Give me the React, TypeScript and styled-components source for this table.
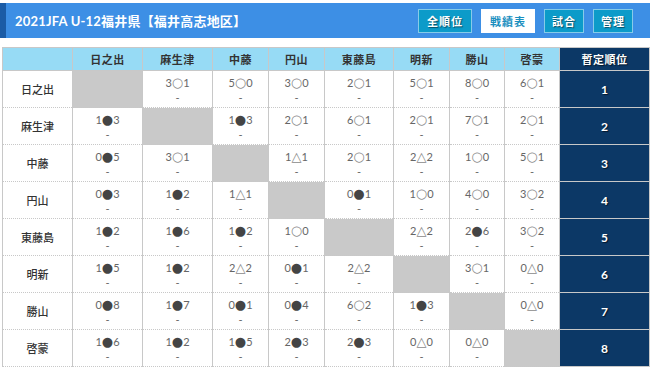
import React from 'react'
import styled, { createGlobalStyle } from 'styled-components'

const GlobalStyle = createGlobalStyle`
  html, body {
    margin: 0;
    padding: 0;
    background: #ffffff;
    font-family: Lato, "Noto Sans CJK JP", sans-serif;
  }
`

const Page = styled.div`
  width: 650px;
  height: 367px;
  overflow: hidden;
  padding-top: 3px;
  box-sizing: border-box;
`

const TitleBar = styled.div`
  display: flex;
  align-items: center;
  justify-content: space-between;
  height: 35px;
  background: #3d8fe5;
  border-left: 6px solid #1b5ca6;
  padding: 0 17px 0 9px;
  box-sizing: border-box;
`

const Title = styled.h1`
  margin: 0;
  color: #ffffff;
  font-family: Lato, "Noto Sans CJK JP", sans-serif;
  font-size: 13px;
  font-weight: bold;
  letter-spacing: 0.2px;
`

const Nav = styled.div`
  display: flex;
  gap: 9px;
`

interface NavButtonProps {
  active?: boolean
  wide?: boolean
}
const NavButton = styled.a<NavButtonProps>`
  display: flex;
  align-items: center;
  justify-content: center;
  height: 24px;
  padding: 0 ${props => props.wide ? '8px' : '7px'};
  box-sizing: border-box;
  border: 1px solid ${props => props.active ? '#ffffff' : '#86cbe8'};
  background: ${props => props.active ? '#ffffff' : '#0c9bc9'};
  color: ${props => props.active ? '#1a8fbf' : '#ffffff'};
  font-family: "Noto Sans CJK JP", sans-serif;
  font-size: 11px;
  font-weight: bold;
  text-shadow: ${props => props.active ? 'none' : '1px 1px 1px rgba(0,0,0,0.5)'};
  letter-spacing: 1px;
`

const Table = styled.table`
  margin: 9px 1px 0 2px;
  width: 647px;
  border-collapse: collapse;
  table-layout: fixed;
`

const HeadCell = styled.th<{ rank?: boolean }>`
  height: 22px;
  padding: 0;
  background: ${props => props.rank ? '#0c3866' : '#97dbf5'};
  color: ${props => props.rank ? '#ffffff' : '#333333'};
  text-shadow: ${props => props.rank ? '1px 1px 1px rgba(0,0,0,0.6)' : 'none'};
  border: 1px solid #c8c8c8;
  font-family: "Noto Sans CJK JP", sans-serif;
  font-size: 11px;
  font-weight: bold;
  text-align: center;
  vertical-align: middle;
  letter-spacing: 0.5px;
`

const Row = styled.tr`
  height: 37px;
`

const NameCell = styled.td`
  padding: 0;
  border-left: 1px solid #c8c8c8;
  border-right: 1px solid #c8c8c8;
  border-bottom: 1px dotted #c8c8c8;
  color: #333333;
  font-family: "Noto Sans CJK JP", sans-serif;
  font-size: 11px;
  font-weight: 500;
  text-align: center;
  vertical-align: middle;
`

const ScoreCell = styled.td<{ blank?: boolean }>`
  padding: 4px 0 0;
  border-left: 1px solid #c8c8c8;
  border-right: 1px solid #c8c8c8;
  border-bottom: 1px dotted #c8c8c8;
  background: ${props => props.blank ? '#c9c9c9' : '#ffffff'};
  color: #666666;
  font-family: Lato, "Noto Sans CJK JP", sans-serif;
  font-size: 11px;
  line-height: 15px;
  text-align: center;
  vertical-align: top;
`

const Mark = styled.span<{ filled?: boolean }>`
  font-family: "DejaVu Sans", sans-serif;
  font-size: 13px;
  color: ${props => props.filled ? '#444444' : '#8a8a8a'};
  line-height: 15px;
`

const RankCell = styled.td`
  padding: 0;
  background: #0c3866;
  border: 1px solid #c8c8c8;
  border-top: 1px solid #9aa8b8;
  color: #ffffff;
  font-family: Lato, sans-serif;
  font-size: 12px;
  font-weight: bold;
  text-shadow: 1px 1px 1px rgba(0,0,0,0.6);
  text-align: center;
  vertical-align: middle;
`

const teams = ['日之出', '麻生津', '中藤', '円山', '東藤島', '明新', '勝山', '啓蒙']
const widths = [70, 70, 70, 56, 56, 69, 56, 55, 55, 90]

const results: string[][] = [
  ['', '3o1', '5o0', '3o0', '2o1', '5o1', '8o0', '6o1'],
  ['1x3', '', '1x3', '2o1', '6o1', '2o1', '7o1', '2o1'],
  ['0x5', '3o1', '', '1t1', '2o1', '2t2', '1o0', '5o1'],
  ['0x3', '1x2', '1t1', '', '0x1', '1o0', '4o0', '3o2'],
  ['1x2', '1x6', '1x2', '1o0', '', '2t2', '2x6', '3o2'],
  ['1x5', '1x2', '2t2', '0x1', '2t2', '', '3o1', '0t0'],
  ['0x8', '1x7', '0x1', '0x4', '6o2', '1x3', '', '0t0'],
  ['1x6', '1x2', '1x5', '2x3', '2x3', '0t0', '0t0', ''],
]

const marks: Record<string, string> = { o: '○', x: '●', t: '△' }

const Score = ({ value }: { value: string }) => (
  <>
    {value[0]}
    <Mark filled={value[1] === 'x'}>{marks[value[1]]}</Mark>
    {value[2]}
    <br />-
  </>
)

const App = () => {
  return (
    <Page>
      <GlobalStyle />
      <TitleBar>
        <Title>2021JFA U-12福井県【福井高志地区】</Title>
        <Nav>
          <NavButton wide>全順位</NavButton>
          <NavButton wide active>戦績表</NavButton>
          <NavButton>試合</NavButton>
          <NavButton>管理</NavButton>
        </Nav>
      </TitleBar>
      <Table>
        <colgroup>
          {widths.map((w, i) => <col key={i} style={{ width: w }} />)}
        </colgroup>
        <thead>
          <tr>
            <HeadCell />
            {teams.map(t => <HeadCell key={t}>{t}</HeadCell>)}
            <HeadCell rank>暫定順位</HeadCell>
          </tr>
        </thead>
        <tbody>
          {teams.map((team, r) => (
            <Row key={team}>
              <NameCell>{team}</NameCell>
              {results[r].map((v, c) => (
                <ScoreCell key={c} blank={v === ''}>
                  {v !== '' && <Score value={v} />}
                </ScoreCell>
              ))}
              <RankCell>{r + 1}</RankCell>
            </Row>
          ))}
        </tbody>
      </Table>
    </Page>
  )
}

export default App
